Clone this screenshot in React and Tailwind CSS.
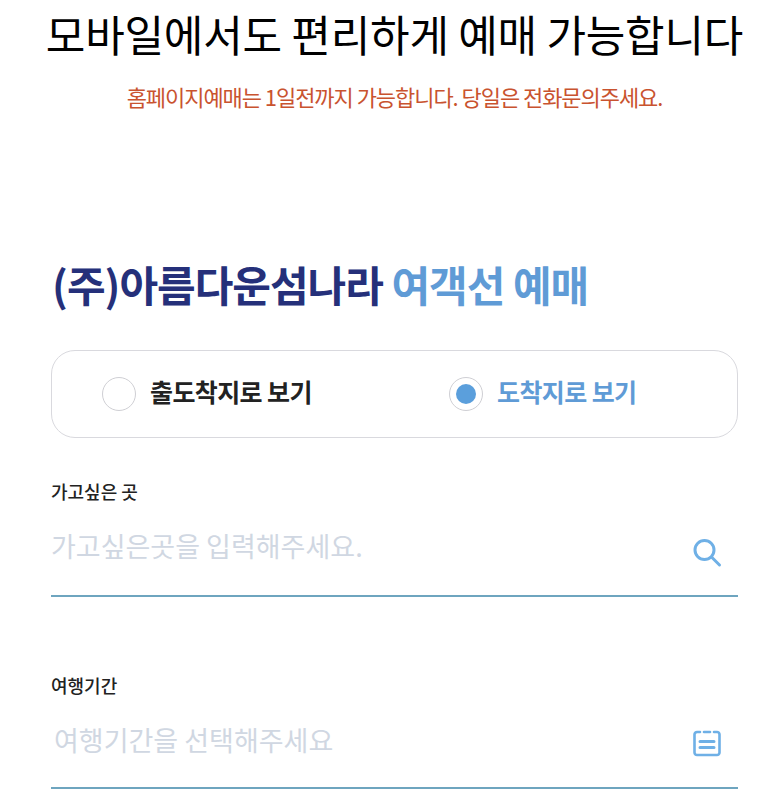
const font = "font-['Noto_Sans_CJK_KR','Noto_Sans',sans-serif]";

function SearchIcon() {
  return (
    <svg width="30" height="30" viewBox="0 0 30 30" fill="none" stroke="#6fb0e6" strokeWidth="3" strokeLinecap="round">
      <circle cx="12.5" cy="12" r="9.5" />
      <path d="M20 19.5l7.5 7.5" />
    </svg>
  );
}

function MemoIcon() {
  return (
    <svg width="30" height="28" viewBox="0 0 30 28" fill="none" stroke="#6fb0e6" strokeWidth="2.6" strokeLinecap="round" strokeLinejoin="round">
      <path d="M8 3H5a2.5 2.5 0 0 0-2.5 2.5v18A2.5 2.5 0 0 0 5 26h20a2.5 2.5 0 0 0 2.5-2.5v-18A2.5 2.5 0 0 0 25 3h-3" />
      <path d="M12 3h6" />
      <path d="M8 12.5h14M8 18.5h14" strokeWidth="3" />
    </svg>
  );
}

function Radio({ checked, label }) {
  return (
    <div className="flex items-center gap-[14px]">
      <span className="flex h-[34px] w-[34px] items-center justify-center rounded-full border border-[#cfcfd4] bg-white">
        {checked && <span className="h-[20px] w-[20px] rounded-full bg-[#5b9fdc]" />}
      </span>
      <span className={`pb-[4px] text-[25px] font-bold tracking-[-0.6px] ${checked ? 'text-[#5f9bd6]' : 'text-[#222222]'}`}>{label}</span>
    </div>
  );
}

function Field({ label, placeholder, icon, className, height, textClass, iconClass }) {
  return (
    <div className={className}>
      <div className="text-[18px] font-medium leading-[22px] text-[#222222]">{label}</div>
      <div className={`flex items-center justify-between border-b-2 border-[#6ea5bf] pb-[4px] ${height}`}>
        <span className={`text-[27px] text-[#d0d7e2] ${textClass}`}>{placeholder}</span>
        <span className={`mr-[16px] flex ${iconClass}`}>{icon}</span>
      </div>
    </div>
  );
}

export default function App() {
  return (
    <div className={`min-h-screen bg-white pl-[51px] pr-[32px] ${font}`}>
      <div className="pt-[1px] text-center">
        <h1 className="-mx-[20px] whitespace-nowrap text-[43px] font-normal leading-[64px] tracking-[-0.2px] text-black">모바일에서도 편리하게 예매 가능합니다</h1>
        <p className="mt-[15px] whitespace-nowrap text-[22px] leading-[32px] tracking-[-1.05px] text-[#c9532f]">홈페이지예매는 1일전까지 가능합니다. 당일은 전화문의주세요.</p>
      </div>

      <h2 className="ml-[1px] mt-[144px] whitespace-nowrap text-[42px] font-bold leading-[56px] tracking-[-1px] text-[#25307a]">
        (주)아름다운섬나라 <span className="text-[#5f9bd6]">여객선 예매</span>
      </h2>

      <div className="mt-[38px] flex h-[88px] items-center rounded-[24px] border border-[#d9d9de] pl-[50px]">
        <div className="w-[347px]"><Radio label="출도착지로 보기" /></div>
        <Radio checked label="도착지로 보기" />
      </div>

      <Field className="mt-[42px]" height="h-[95px]" iconClass="mt-[12px]" label="가고싶은 곳" placeholder="가고싶은곳을 입력해주세요." icon={<SearchIcon />} />
      <Field className="mt-[77px]" height="h-[93px]" textClass="pl-[3px] mt-[2px]" iconClass="mt-[7px]" label="여행기간" placeholder="여행기간을 선택해주세요" icon={<MemoIcon />} />
    </div>
  );
}
